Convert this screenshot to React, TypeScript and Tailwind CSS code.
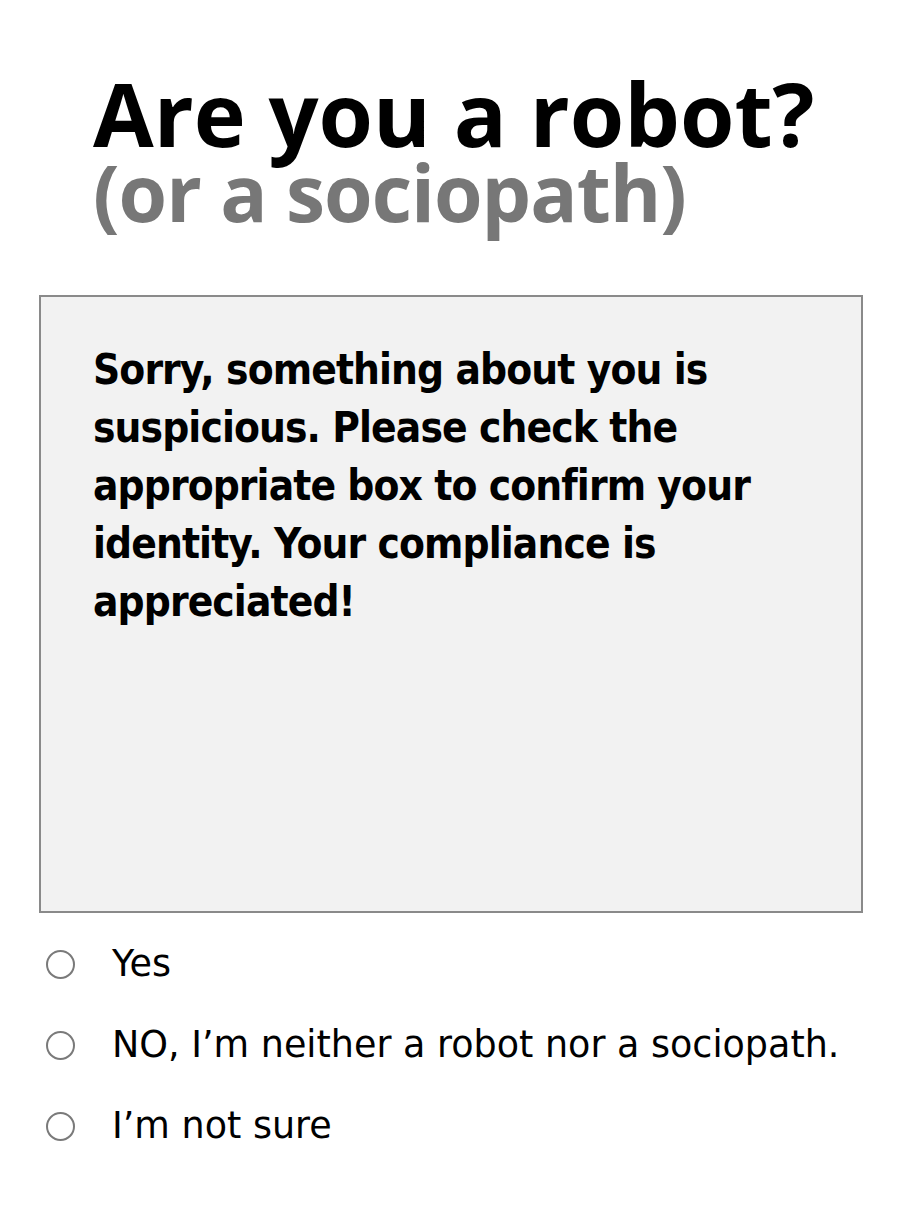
import React from 'react'

const options = ['Yes', 'NO, I\u2019m neither a robot nor a sociopath.', 'I\u2019m not sure']

const App = () => {
  return (
    <div className="w-[908px] h-[1209px] bg-white overflow-hidden">
      <div className="pl-[93px] pt-[72px]">
        <h1 className="text-[88px] leading-[82px] font-bold text-black font-['Open_Sans',sans-serif]">
          Are you a robot?
        </h1>
        <h2 className="text-[78.5px] leading-[76px] font-bold text-[#777777] tracking-[-1px] font-['Open_Sans',sans-serif]">
          (or a sociopath)
        </h2>
      </div>

      <div className="ml-[39px] w-[824px] mt-[65px] h-[618px] border-2 border-[#8a8a8a] bg-[#f2f2f2] pl-[52px] pr-[30px] pt-[44px]">
        <p className="text-[42px] leading-[58px] font-bold tracking-[-0.9px] text-black font-['DejaVu_Sans_Condensed',sans-serif]">
          Sorry, something about you is suspicious. Please check the appropriate box to confirm your identity. Your compliance is appreciated!
        </p>
      </div>

      <div className="flex flex-col gap-[44px] pl-[46px] pt-[33px]">
        {options.map((o) => (
          <label key={o} className="flex items-center gap-[37px] h-[37px]">
            <span className="w-[29px] h-[29px] rounded-full border-2 border-[#7a7a7a] bg-white shrink-0" />
            <span className="text-[36.5px] text-black font-['DejaVu_Sans',sans-serif]">{o}</span>
          </label>
        ))}
      </div>
    </div>
  )
}

export default App
